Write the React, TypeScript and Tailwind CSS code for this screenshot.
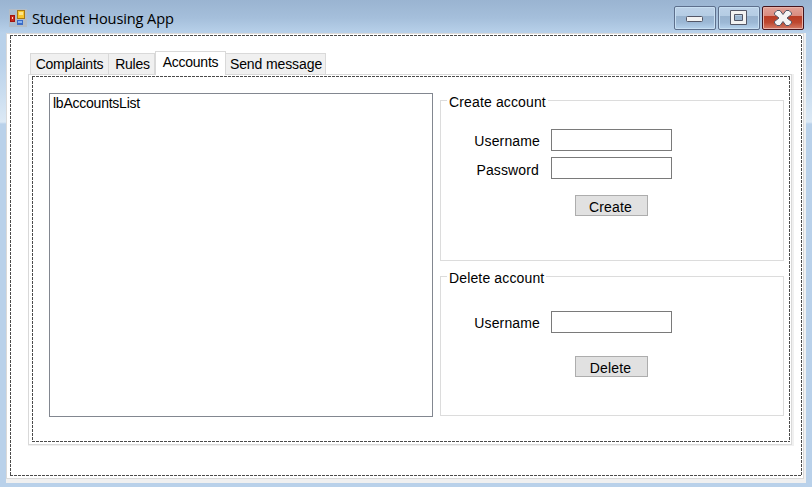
import type { ReactNode } from 'react';

const dashX = 'h-px shrink-0 bg-[repeating-linear-gradient(90deg,#4b4b4b_0px,#4b4b4b_3px,#ffffff_3px,#ffffff_4px)]';
const dashY = 'w-px shrink-0 bg-[repeating-linear-gradient(180deg,#4b4b4b_0px,#4b4b4b_3px,#ffffff_3px,#ffffff_4px)]';

function DashedFrame({ className, children }: { className: string; children: ReactNode }) {
  return (
    <div className={`flex flex-col ${className}`}>
      <div className={dashX} />
      <div className="flex min-h-0 flex-1">
        <div className={dashY} />
        <div className="min-w-0 flex-1">{children}</div>
        <div className={dashY} />
      </div>
      <div className={dashX} />
    </div>
  );
}

function AppIcon() {
  return (
    <svg width="18" height="18" viewBox="0 0 18 18" shapeRendering="crispEdges">
      <path d="M0 0h18v18H0z" fill="#b4bdc6" />
      <path d="M1 1h6v4H1zM1 14h6v3H1z" fill="#a9bdd2" />
      <path d="M8 1h8v9H8z" fill="#a87812" />
      <path d="M9 2h6v7H9z" fill="#f8c62c" />
      <path d="M10 3h4v3h-4z" fill="#fde58a" />
      <path d="M1 6h5v7H1z" fill="#a31510" />
      <path d="M2 7h3v5H2z" fill="#c92a1c" />
      <path d="M3 8h1v2H3z" fill="#ffd4c0" />
      <path d="M8 11h6v5H8z" fill="#3a6cc8" />
      <path d="M9 12h4v2H9z" fill="#86b4f4" />
    </svg>
  );
}

function CaptionButton({ close, children }: { close?: boolean; children: ReactNode }) {
  return (
    <button
      className={
        close
          ? 'flex h-6 w-[42px] items-start justify-start rounded-[2px] border border-[#43131c] bg-[linear-gradient(180deg,#e2a197_0%,#d98a7e_42%,#b93c25_43%,#bd472f_70%,#d57b67_100%)] pl-[11px] shadow-[inset_0_0_0_1px_#e8b3a8]'
          : 'flex h-6 w-[42px] items-start justify-start rounded-[2px] border border-[#5d6f8c] bg-[linear-gradient(180deg,#bdd2e8_0%,#b4cce4_42%,#98b3cf_43%,#9cb8d5_70%,#b6d2ec_100%)] pl-[11px] shadow-[inset_0_0_0_1px_#c8dff2]'
      }
    >
      {children}
    </button>
  );
}

function Tab({ label, className }: { label: string; className: string }) {
  return (
    <div className={`flex shrink-0 justify-center border-t border-r border-[#d9d9d9] whitespace-nowrap leading-4 ${className}`}>
      <span>{label}</span>
    </div>
  );
}

function Group({ title, className, children }: { title: string; className: string; children: ReactNode }) {
  return (
    <fieldset className={`w-[344px] border border-[#dcdcdc] ${className}`}>
      <div className="-mt-[7px] ml-1.5 h-[17px] w-fit bg-white pr-0.5 pl-0.5 leading-4">{title}</div>
      {children}
    </fieldset>
  );
}

function Field({ label, className, labelClassName }: { label: string; className: string; labelClassName: string }) {
  return (
    <label className={`flex h-[22px] ${className}`}>
      <span className={`w-[99px] text-right leading-4 ${labelClassName}`}>{label}</span>
      <input className="ml-[11px] h-[22px] w-[121px] border border-[#7a7a7a] bg-white outline-none" />
    </label>
  );
}

function ActionButton({ label, className }: { label: string; className: string }) {
  return (
    <button className={`ml-[134px] block h-[21px] w-[73px] border border-[#adadad] bg-[#e1e1e1] pt-0.5 pr-0.5 leading-4 ${className}`}>
      {label}
    </button>
  );
}

export default function App() {
  return (
    <div className="flex h-[487px] w-[812px] flex-col overflow-hidden bg-[linear-gradient(180deg,#9ab4d1_0px,#a5bfdb_18px,#b8d1ea_33px,#b9d1ea_60px,#c8dcef_90px,#dce9f5_122px,#b9d1ea_124px,#b9d1ea_487px)] font-['Liberation_Sans',Arial,sans-serif] text-[14px] tracking-[-0.24px] text-black">
      <header className="flex h-[33px] shrink-0 items-start">
        <div className="mt-[9px] ml-[9px]">
          <AppIcon />
        </div>
        <h1 className="mt-2 ml-[5px] font-['Open_Sans',sans-serif] text-[14.6px] leading-5 tracking-[-0.12px]">Student Housing App</h1>
        <div className="mt-1.5 mr-2 ml-auto flex gap-0.5">
          <CaptionButton>
            <svg width="17" height="6" viewBox="0 0 17 6" className="mt-[9px]">
              <rect x=".5" y=".5" width="16" height="5" rx="1" fill="#f2f2f2" stroke="#535666" />
            </svg>
          </CaptionButton>
          <CaptionButton>
            <svg width="17" height="15" viewBox="0 0 17 15" className="mt-[3px]">
              <path d="M.5.5h16v14H.5zM4.5 4.5v6h8v-6z" fill="#f2f2f2" fillRule="evenodd" stroke="#535666" />
            </svg>
          </CaptionButton>
          <CaptionButton close>
            <svg width="18" height="16" viewBox="0 0 18 16" className="mt-[3px]">
              <path d="M.5 3 3 .5h3L9 4.500 12 .5h3L17.500 3v1.500L13 8l4.500 3.500V13L15 15.500h-3L9 11.500l-3 4H3L.5 13v-1.500L5 8 .5 4.500z" fill="#f4f4f4" stroke="#535666" strokeLinejoin="round" />
            </svg>
          </CaptionButton>
        </div>
      </header>
      <main className="ml-1.5 h-[450px] w-[800px] bg-[#f0f0f0]">
        <div className="h-[446px] w-[798px] border border-[#d9d9d9] bg-white pt-px pl-[3px]">
          <DashedFrame className="h-[441px] w-[792px]">
            <div className="pt-[15px] pl-[17px]">
              <nav className="flex h-[23px] items-end pl-0.5">
                <Tab label="Complaints" className="h-[21px] w-[79px] border-l bg-[#f0f0f0] pt-0.5" />
                <Tab label="Rules" className="h-[21px] w-[46px] bg-[#f0f0f0] pt-0.5 pl-0.5" />
                <Tab label="Accounts" className="z-10 -mb-px h-6 w-[71px] border-l bg-white pt-0.5" />
                <Tab label="Send message" className="h-[21px] w-[100px] bg-[#f0f0f0] pt-0.5 pl-px tracking-[-0.1px]" />
              </nav>
              <div className="h-[372px] w-[766px] bg-[#f0f0f0]">
                <div className="h-[371px] w-[764px] border border-[#d9d9d9] bg-white pt-px pl-[3px]">
                  <DashedFrame className="h-[366px] w-[758px]">
                    <div className="flex pt-4 pl-4">
                      <div className="h-[324px] w-[384px] border border-[#828790] pt-px pl-[3px] leading-4">lbAccountsList</div>
                      <div className="mt-[7px] ml-[7px] tracking-[0.14px]">
                        <Group title="Create account" className="h-[161px]">
                          <Field label="Username" className="mt-[18px]" labelClassName="pt-1" />
                          <Field label="Password" className="mt-1.5" labelClassName="pt-[5px] pr-px" />
                          <ActionButton label="Create" className="mt-4" />
                        </Group>
                        <Group title="Delete account" className="mt-[15px] h-[140px]">
                          <Field label="Username" className="mt-6" labelClassName="pt-1" />
                          <ActionButton label="Delete" className="mt-[23px]" />
                        </Group>
                      </div>
                    </div>
                  </DashedFrame>
                </div>
              </div>
            </div>
          </DashedFrame>
        </div>
      </main>
    </div>
  );
}
